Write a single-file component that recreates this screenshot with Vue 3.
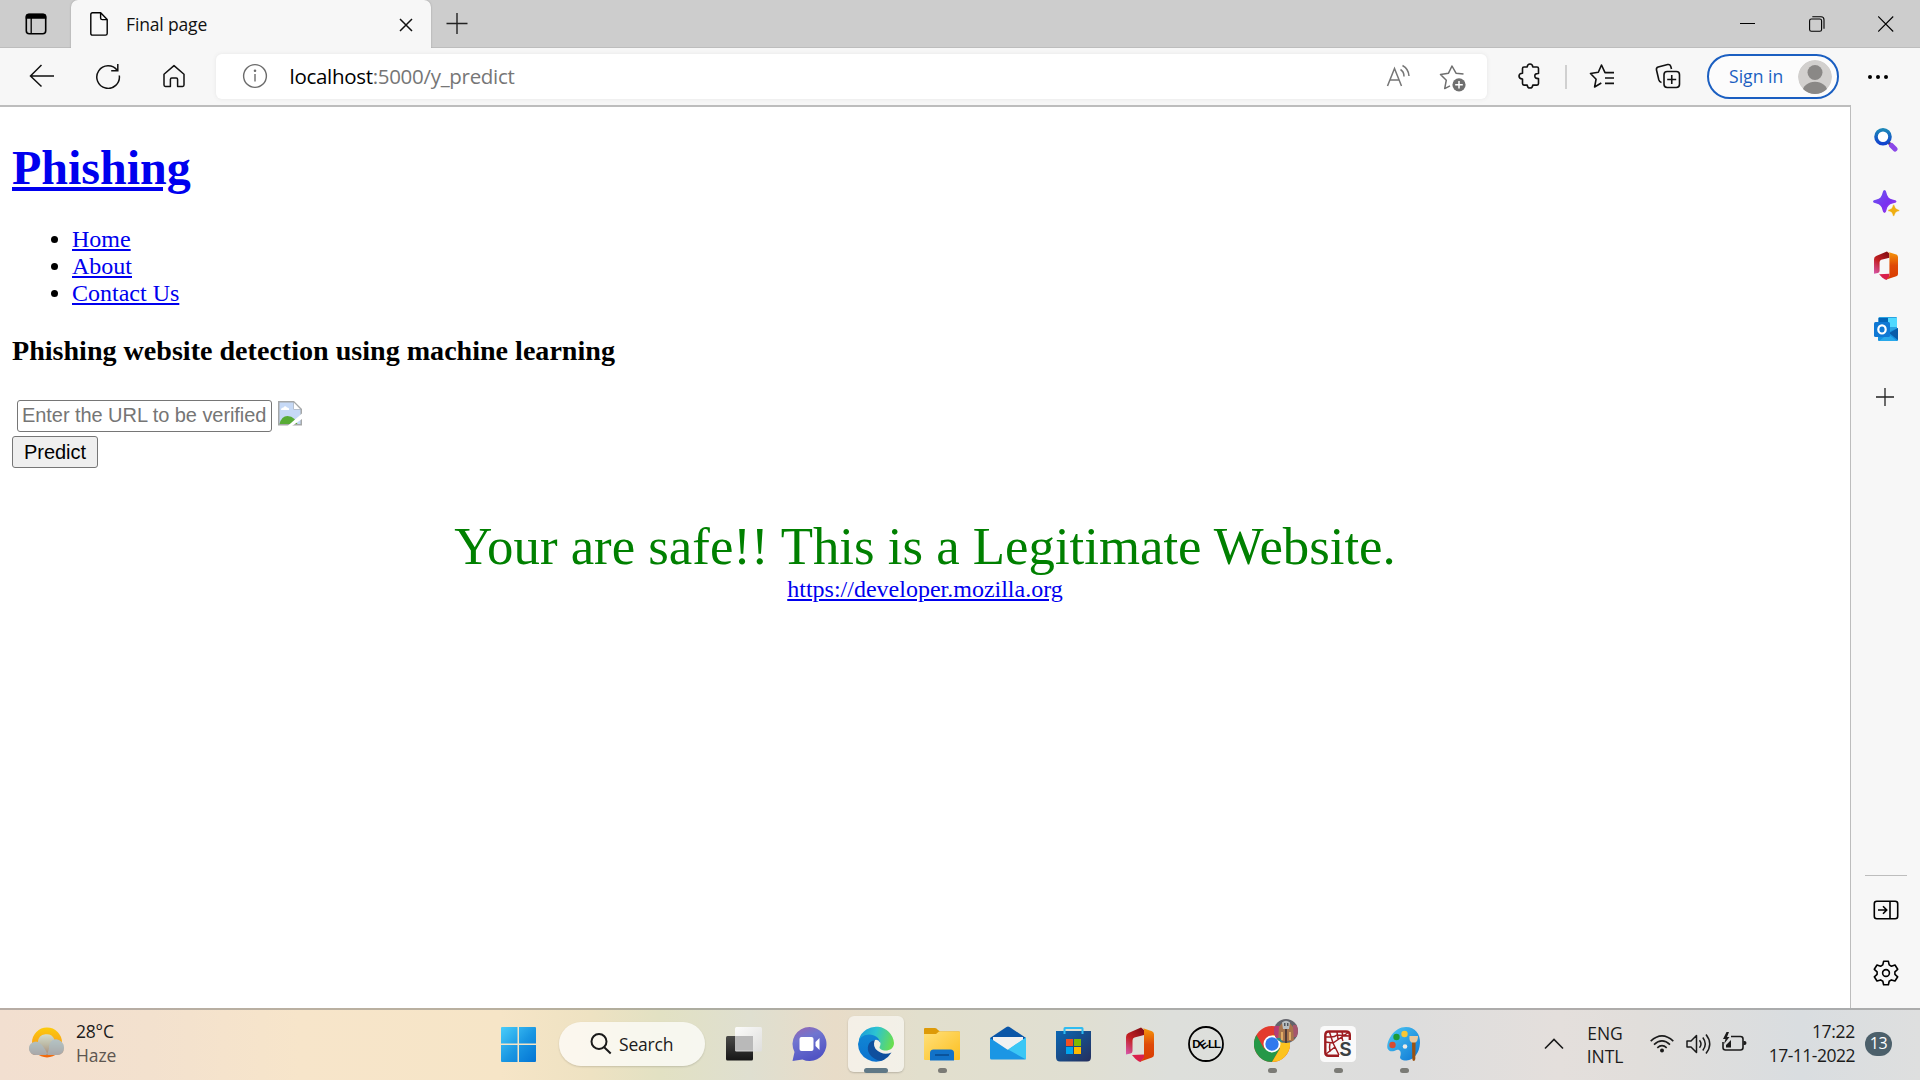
<script setup>
const links = ['Home', 'About', 'Contact Us']
</script>

<template>
  <div class="screen">
    <header class="tabstrip">
      <svg class="tab-actions" width="22" height="22" viewBox="0 0 22 22" fill="none" stroke="#000" stroke-width="1.6">
        <rect x="1.3" y="1.3" width="19.4" height="19.4" rx="3" />
        <path d="M1.5 5V3.5q0-2 2-2h15q2 0 2 2V5z" fill="#000" />
        <path d="M6.2 5v15.500" stroke-width="1.300" />
      </svg>
      <div class="tab">
        <svg width="18" height="24" viewBox="0 0 18 24" fill="none" stroke="#000" stroke-width="1.4" stroke-linejoin="round">
          <path d="M2.500.800h8.200l6.500 6.600v14q0 1.700-1.700 1.700h-13Q.8 23.100.8 21.400V2.500Q.8.800 2.500.800zM10.600.900v5q0 1.700 1.700 1.700h4.800" />
        </svg>
        <span class="tab-title">Final page</span>
        <svg class="tab-close" width="14" height="14" viewBox="0 0 14 14" stroke="#111" stroke-width="1.5"><path d="M1 1l12 12M13 1L1 13" /></svg>
      </div>
      <svg class="new-tab" width="22" height="22" viewBox="0 0 22 22" stroke="#222" stroke-width="1.4"><path d="M11 0v21M.5 10.500h21" /></svg>
      <div class="window-controls">
        <svg width="16" height="16" viewBox="0 0 16 16" stroke="#000" stroke-width="1"><path d="M0 7.500h15" /></svg>
        <svg width="16" height="16" viewBox="0 0 16 16" fill="none" stroke="#000" stroke-width="1.100"><rect x=".6" y="3" width="12" height="12.200" rx="1.800" /><path d="M3.300.800h8.700q3 0 3 3v9" /></svg>
        <svg width="16" height="16" viewBox="0 0 16 16" stroke="#000" stroke-width="1.100"><path d="M.2.5l15 15M15.200.5l-15 15" /></svg>
      </div>
    </header>

    <div class="toolbar">
      <svg class="back" width="26" height="24" viewBox="0 0 26 24" fill="none" stroke="#111" stroke-width="1.500"><path d="M12.500 1L1.500 12l11 10.500M1.500 12H25" /></svg>
      <svg class="reload" width="26" height="26" viewBox="0 0 26 26" fill="none" stroke="#111" stroke-width="1.500"><path d="M22.300 7.500A11.300 11.300 0 1 0 24.300 12.500M22.800 1v6.800h-6.600" /></svg>
      <svg class="home" width="24" height="24" viewBox="0 0 24 24" fill="none" stroke="#111" stroke-width="1.500" stroke-linejoin="round"><path d="M2 10.300L12 1.600l10 8.700v10.700q0 1.400-1.400 1.400h-5v-7q0-1.400-1.400-1.400H9.800q-1.400 0-1.400 1.400v7h-5Q2 22.400 2 21z" /></svg>
      <div class="address">
        <svg class="info" width="26" height="26" viewBox="0 0 26 26" fill="none" stroke="#6b6b6b" stroke-width="1.400"><circle cx="13" cy="13" r="11.400" /><path d="M13 11v7.500" /><circle cx="13" cy="7.700" r=".6" fill="#6b6b6b" /></svg>
        <span class="url"><b>localhost</b>:5000/y_predict</span>
        <svg class="read" width="24" height="24" viewBox="0 0 24 24" fill="none" stroke="#767676" stroke-width="1.500"><path d="M1.500 22L8.500 4.500 15.500 22M4 16h9" /><path d="M14.500 5.500q3.500 2.200 3.500 7M16.500 1.500q6.200 3.500 6.500 10.500" /></svg>
        <svg class="star" width="28" height="28" viewBox="0 0 28 28" fill="none" stroke="#6f6f6f" stroke-width="1.500" stroke-linejoin="round"><path d="M24.500 10l-7.500-.8L13 2 9.500 9.200 1.500 10.500l5.800 5.700-1.600 8.400 5.300-2.700" /><circle cx="20" cy="20.800" r="6.600" fill="#6f6f6f" stroke="none" /><path d="M20 17v7.600M16.200 20.800h7.600" stroke="#fff" /></svg>
      </div>
      <svg class="puzzle" width="24" height="26" viewBox="0 0 24 26" fill="none" stroke="#111" stroke-width="1.600" stroke-linejoin="round"><path d="M5.500 5.500q0-1.500 1.500-1.500h3.200q.3-3 2.800-3t2.800 3H20q1.500 0 1.500 1.500v5q-3.700-.2-3.700 2.500t3.700 2.600v5q0 1.500-1.500 1.500h-4.200q-.3 2.900-2.800 2.900t-2.800-2.900H7q-1.500 0-1.500-1.500v-4.500q-3.500-.2-3.500-3t3.500-2.900z" /></svg>
      <i class="divider"></i>
      <svg class="favs" width="26" height="26" viewBox="0 0 26 26" fill="none" stroke="#111" stroke-width="1.600" stroke-linejoin="round"><path d="M22 9.600h-6L12.500 2 9.300 9.200 1.500 10.500l5.600 5.700L5.600 24l6.700-4M16.500 9.600h8.500M16 15h9M16 20.400h9" /></svg>
      <svg class="collections" width="26" height="26" viewBox="0 0 26 26" fill="none" stroke="#111" stroke-width="1.600"><path d="M6.500 19.500Q4.400 19 3.800 16.800L1.500 7q-.5-2.300 1.700-3l9.500-2.500q2.300-.4 3 1.700L16.500 6" /><rect x="9" y="8.500" width="15.500" height="16" rx="3.200" /><path d="M16.750 12v9M12.200 16.500h9" /></svg>
      <div class="signin">
        <span>Sign in</span>
        <svg width="34" height="34" viewBox="0 0 34 34"><defs><clipPath id="av"><circle cx="17" cy="17" r="17" /></clipPath></defs><g clip-path="url(#av)"><circle cx="17" cy="17" r="17" fill="#d2d0ce" /><circle cx="17" cy="12.500" r="7.500" fill="#8a8886" /><ellipse cx="17" cy="32" rx="12.500" ry="10.300" fill="#8a8886" /></g></svg>
      </div>
      <svg class="more" width="20" height="6" viewBox="0 0 20 6"><circle cx="2" cy="3" r="2" /><circle cx="10" cy="3" r="2" /><circle cx="18" cy="3" r="2" /></svg>
    </div>

    <div class="middle">
      <main class="page">
        <h1><a>Phishing</a></h1>
        <ul>
          <li v-for="l in links" :key="l"><a>{{ l }}</a></li>
        </ul>
        <h3>Phishing website detection using machine learning</h3>
        <div class="form-row">
          <div class="field"><span>Enter the URL to be verified</span></div>
          <svg class="broken" width="24" height="25" viewBox="0 0 24 25"><path d="M0 0h16l8 8v16.500H0z" fill="#a5a7a8" /><path d="M1.500 1.500h14v7h7V23h-21z" fill="#c6d9f6" /><path d="M16 1.800V8h6z" fill="#fff" /><path d="M3 9q0-2.500 2.500-2.500Q7 4 9 6.500q2.500.3 2 2.500z" fill="#fff" /><path d="M1.500 23q2-8 8-8 4 0 7 3l3 5z" fill="#57ab35" /><path d="M24 12.500L9.500 25H14l10-7z" fill="#fff" /></svg>
        </div>
        <button type="button">Predict</button>
        <div class="verdict">Your are safe!! This is a Legitimate Website.</div>
        <div class="result"><a>https://developer.mozilla.org</a></div>
      </main>

      <aside class="sidebar">
        <svg class="s1" width="24" height="24" viewBox="0 0 24 24"><defs><linearGradient id="sg" x1="0" y1="0" x2="0" y2="1"><stop stop-color="#1c86b8" /><stop offset="1" stop-color="#1242cf" /></linearGradient></defs><path d="M14.500 14.500l3 3" stroke="#5b4150" stroke-width="3" /><path d="M17.500 17.500l3.500 3.500" stroke="#8b48e8" stroke-width="5" stroke-linecap="round" /><circle cx="9" cy="8.800" r="7" fill="#fff" stroke="url(#sg)" stroke-width="3.600" /></svg>
        <svg class="s2" width="27" height="27" viewBox="0 0 27 27"><defs><linearGradient id="pg" x1="0" y1="0" x2="1" y2="1"><stop stop-color="#6b5cf0" /><stop offset=".6" stop-color="#7a2ff0" /><stop offset="1" stop-color="#b04ae8" /></linearGradient></defs><path d="M11.500 0q1.500 0 2 3 1 5.500 6 6.500 4 .7 4 2t-4 2q-5 1-6 6.500-.5 3-2 3t-2-3q-1-5.500-6-6.500-3.500-.7-3.500-2t3.500-2q5-1 6-6.500.5-3 2-3z" fill="url(#pg)" /><path d="M20.700 14.500q1 0 1.300 2 .4 2.300 2.700 2.700 1.800.3 1.800 1.200t-1.800 1.200q-2.300.4-2.700 2.700-.3 2-1.300 2t-1.300-2q-.4-2.300-2.700-2.700-1.800-.3-1.800-1.200t1.800-1.200q2.300-.4 2.700-2.700.3-2 1.300-2z" fill="#efae12" stroke="#f7f7f7" stroke-width=".5" /></svg>
        <svg class="s3" width="24" height="29" viewBox="0 0 28 35" preserveAspectRatio="none"><use href="#office" /></svg>
        <svg class="s4" width="24" height="24" viewBox="0 0 24 24"><path d="M5.500 0H22q1 0 1 1v13H4.500V1q0-1 1-1z" fill="#29a3e2" /><path d="M14 1h9v9h-9z" fill="#50d9ff" /><path d="M4.500 1H14v5H4.500z" fill="#0364b8" /><path d="M4 14l10 1 10-4v12q0 1-1 1H5q-1 0-1-1z" fill="#1490df" /><path d="M24 11v12l-9-7z" fill="#0a5ca8" /><path d="M14 17l9 7H5z" fill="#28a8ea" /><rect y="5" width="16" height="15" rx="1.500" fill="#0f78d4" /><ellipse cx="8" cy="12.400" rx="3.700" ry="4.100" fill="none" stroke="#fff" stroke-width="2.200" /></svg>
        <svg class="s5" width="18" height="18" viewBox="0 0 18 18" stroke="#222" stroke-width="1.300"><path d="M9 0v18M0 9h18" /></svg>
        <i class="rule"></i>
        <svg class="s6" width="26" height="20" viewBox="0 0 26 20" fill="none" stroke="#000" stroke-width="1.600"><rect x="1.300" y="1.300" width="23.400" height="17.400" rx="2.500" /><path d="M17 1.500v17M5 10h8.500M10 6.300l3.700 3.700-3.700 3.700" /></svg>
        <svg class="s7" width="26" height="26" viewBox="0 0 26 26" fill="none" stroke="#000" stroke-width="1.600" stroke-linejoin="round"><path d="M10.600 1.300h4.800l.8 3.600 2.200 1.300 3.600-1.200 2.700 4.300-2.800 2.500v2.500l2.800 2.500-2.700 4.200-3.600-1.100-2.200 1.300-.8 3.500h-4.800l-.8-3.500-2.200-1.300L4 21l-2.700-4.200 2.800-2.500v-2.500L1.300 9.300 4 5l3.600 1.200 2.200-1.300z" /><circle cx="13" cy="13" r="3.400" /></svg>
      </aside>
    </div>

    <footer class="taskbar">
      <svg class="weather" width="36" height="32" viewBox="0 0 36 32"><defs><linearGradient id="sun" x1="0" y1="0" x2="0" y2="1"><stop stop-color="#fccb0b" /><stop offset=".6" stop-color="#f9a11b" /><stop offset="1" stop-color="#f0620b" /></linearGradient><linearGradient id="cl" x1="0" y1="0" x2="0" y2="1"><stop stop-color="#d4dccb" /><stop offset=".5" stop-color="#bcb9a5" /><stop offset="1" stop-color="#a98974" /></linearGradient></defs><circle cx="18" cy="15.500" r="15" fill="url(#sun)" /><path d="M7 28a6.500 6.500 0 0 1-1-13q1.500-.4 2.800 0a8.700 8.700 0 0 1 16.700-2.300a8 8 0 0 1 9.500 7.800q0 7.500-7 7.500z" fill="url(#cl)" /><path d="M7 28q-7-1-7-6.500T6 14.500q7 0 13 13.500zM28 28q7-1 7-7.500T27 12q-6 1-7 7 0 6-3 9z" fill="#a8bccb" opacity=".6" /></svg>
      <div class="weather-text"><span>28°C</span><small>Haze</small></div>

      <div class="apps">
        <div class="app start"><svg width="36" height="36" viewBox="0 0 36 36"><defs><linearGradient id="wg" gradientUnits="userSpaceOnUse" x1="0" y1="0" x2="36" y2="36"><stop stop-color="#4cd0fb" /><stop offset=".55" stop-color="#1996e2" /><stop offset="1" stop-color="#0374d4" /></linearGradient></defs><path d="M2 1h15.500v16.500H1V2q0-1 1-1zM19 1h16q1 0 1 1v15.500H19zM1 19h16.500v17H2q-1 0-1-1zM19 19h17v16q0 1-1 1H19z" fill="url(#wg)" /></svg></div>
        <div class="search"><svg width="22" height="22" viewBox="0 0 22 22" fill="none" stroke="#1a1a1a" stroke-width="2"><circle cx="9" cy="8.500" r="7.500" /><path d="M14.200 14.200l6.500 6.300" /></svg><span>Search</span></div>
        <div class="app"><svg width="36" height="36" viewBox="0 0 36 36"><defs><linearGradient id="tk" x1="0" y1="0" x2="0" y2="1"><stop stop-color="#4a4a48" /><stop offset="1" stop-color="#161616" /></linearGradient><linearGradient id="tw" x1="0" y1="0" x2="1" y2="1"><stop stop-color="#fff" /><stop offset="1" stop-color="#dedede" /></linearGradient></defs><rect y="10" width="27" height="24.500" rx="1.500" fill="url(#tk)" /><rect x="9" y="1" width="27" height="24.500" rx="1.500" fill="url(#tw)" opacity=".9" /><path d="M9 10h18v14.500H9z" fill="#b9b9b9" /></svg></div>
        <div class="app"><svg width="36" height="36" viewBox="0 0 36 36"><defs><linearGradient id="ch" x1="0" y1="0" x2=".4" y2="1"><stop stop-color="#9a64ad" /><stop offset=".4" stop-color="#7075d0" /><stop offset="1" stop-color="#5154c4" /></linearGradient></defs><path d="M17.500 1a17 17 0 1 1-7 32.500L.5 35l2-9A17 17 0 0 1 17.500 1z" fill="url(#ch)" /><rect x="7.500" y="11" width="14" height="14" rx="2" fill="#fff" /><path d="M23.500 16l4-4v12l-4-4z" fill="#fff" /></svg></div>
        <div class="app active"><svg width="36" height="36" viewBox="0 0 36 36"><defs><linearGradient id="eg" x1="0" y1=".3" x2="1" y2=".5"><stop stop-color="#1c9bd8" /><stop offset=".45" stop-color="#2cc3d2" /><stop offset="1" stop-color="#69de50" /></linearGradient><linearGradient id="eb" x1="0" y1="0" x2="0" y2="1"><stop stop-color="#1186d4" /><stop offset="1" stop-color="#0b72cf" /></linearGradient></defs><path d="M1 13A18 18 0 0 1 36 17c0 5-4 7.500-8.500 7.500-3.500 0-6-1.500-6-3 0-1 1-1.500 1-4 0-4-4-7-9-7q-8 0-12.500 5z" fill="url(#eg)" /><path d="M0 18Q1 9 11 8.500c6 0 11 4 11.500 8.500Q20 13 17 14c-4 1.500-5 6-3 11 2.500 6 8 9 14 7.500A18 18 0 0 1 0 18z" fill="url(#eb)" /><path d="M17 14c-7 1-9 8-5.500 14 3.500 5 10 8 14 6q5-2.500 8-7.500-6 2.500-11 0-7-3.500-6.500-9 .2-2 1-3.500z" fill="#0f4f9e" /></svg><i></i></div>
        <div class="app run"><svg width="36" height="36" viewBox="0 0 36 36"><defs><linearGradient id="fg" x1="0" y1="0" x2="1" y2="1"><stop stop-color="#ffe07a" /><stop offset="1" stop-color="#fcbf20" /></linearGradient></defs><path d="M0 3q0-1 1-1h10q1.500 0 3 2l2 1.500h19q1 0 1 1V12H0z" fill="#dd9a08" /><path d="M0 8h12l3-2.500h20q1 0 1 1V33q0 1-1 1H1q-1 0-1-1z" fill="url(#fg)" /><path d="M6 34V27q0-3.500 3.500-3.500h17Q30 23.500 30 27v7.500H6z" fill="#1172c8" /><path d="M11 29h14" stroke="#0a4c90" stroke-width="1.600" /></svg><i></i></div>
        <div class="app"><svg width="36" height="36" viewBox="0 0 36 36"><path d="M0 12L16.500 1q1.500-1 3 0L36 12v5H0z" fill="#0a56a8" /><path d="M3 11h30v12H3z" fill="#f1f1f1" /><path d="M0 12l18 12L36 11.500V32q0 1.500-1.500 1.500h-33Q0 33.500 0 32z" fill="#1b96e4" /><path d="M18 23.500l18-12V33.500z" fill="#3bc7f5" /></svg></div>
        <div class="app"><svg width="36" height="36" viewBox="0 0 36 36"><defs><linearGradient id="st" x1="0" y1="0" x2="1" y2="1"><stop stop-color="#0a67b4" /><stop offset="1" stop-color="#262f5c" /></linearGradient></defs><path d="M0 5h35v26q0 4.500-4 4.500H4q-4 0-4-4.500z" fill="url(#st)" /><path d="M8.500 8V2.500Q8.500 2 9 2h17q.5 0 .5.500V8" fill="none" stroke="#2fbcf1" stroke-width="2" /><path d="M10 13h7v7h-7z" fill="#f25022" /><path d="M18 13h7v7h-7z" fill="#7fba00" /><path d="M10 21h7v7h-7z" fill="#00a4ef" /><path d="M18 21h7v7h-7z" fill="#ffb900" /></svg></div>
        <div class="app"><svg width="28" height="35" viewBox="0 0 28 35"><defs><linearGradient id="o1" x1=".6" y1="0" x2="0" y2="1"><stop stop-color="#8e1016" /><stop offset=".45" stop-color="#c32022" /><stop offset="1" stop-color="#d75ab0" /></linearGradient><linearGradient id="o2" x1="0" y1="0" x2="0" y2="1"><stop stop-color="#f79a0a" /><stop offset=".5" stop-color="#df4a08" /><stop offset="1" stop-color="#d83b01" /></linearGradient></defs><g id="office"><path d="M0 10Q0 7 2.500 6L15 .5 18 3v5L8.500 10.500q-2 .7-2 3V24q0 2-2 2.500L0 27.500z" fill="url(#o1)" /><path d="M6 28l12-.5V31l-3.500 4q-1.500 0-5-3z" fill="#d9204c" /><path d="M15 .5l11 3.800q2 .8 2 3v20.400q0 2-2 2.800l-11.500 4 3.500-4V2z" fill="url(#o2)" /></g></svg></div>
        <div class="app"><svg width="36" height="36" viewBox="0 0 36 36"><circle cx="18" cy="18" r="17" fill="none" stroke="#000" stroke-width="1.800" /><g class="dell"><text x="4.200" y="22.200">D</text><text x="11.500" y="22" transform="rotate(-38 16 18)">E</text><text x="20" y="22.200" textLength="13">LL</text></g></svg></div>
        <div class="app run chrome"><svg width="36" height="36" viewBox="0 0 36 36"><circle cx="18" cy="18" r="18" fill="#e33b2e" /><path d="M2.400 9A18 18 0 0 0 18 36l8-13.500L10 22.500z" fill="#259847" /><path d="M18 36A18 18 0 0 0 33.600 9H18l8 13.500z" fill="#fcc31f" /><circle cx="18" cy="18" r="8.500" fill="#fff" /><circle cx="18" cy="18" r="6.700" fill="#3079ee" /></svg>
          <svg class="profile" width="24" height="24" viewBox="0 0 24 24"><defs><clipPath id="pf"><circle cx="12" cy="12" r="12" /></clipPath></defs><g clip-path="url(#pf)"><path d="M0 0h24v24H0z" fill="#62646b" /><path d="M0 7h6v12H0z" fill="#b63c75" /><path d="M19 6h5v12h-5z" fill="#a5566d" /><path d="M4 22l1-14 4-5h6l4 5 1 14z" fill="#a8744c" /><path d="M8 3.500Q12 0 16 3.500L15 10H9z" fill="#b9bfc2" /><path d="M10 4h1.500v3H10zM13 4h1.500v3H13z" fill="#52565c" /><path d="M7 13h2v8H7zM15 13h2v8h-2z" fill="#e0ad66" /><path d="M11 10h2v14h-2z" fill="#503b37" /><path d="M0 19h6l3 5H0z" fill="#268b8b" /></g></svg><i></i></div>
        <div class="app run"><svg width="36" height="36" viewBox="0 0 36 36"><rect width="36" height="36" rx="4.500" fill="#fafafa" /><g fill="none" stroke="#9d1c20" stroke-width="1.500"><path d="M19 29.800H8.500q-3.200 0-3.200-3.200V9q0-3.500 3.500-3.500H26q3.800 0 3.800 3.500v5" stroke-width="2.400" /><path d="M5 16l8 1L29 6M13 17l6 12M13 17L9.500 6M10 17q-1 4 0 9M15 21L6 28M18 13l-1-7M23 10l-1-4M11 11q4 0 6-2l12 1M5 11l6 0M22 10q0 3 1 5" /></g><text class="spy" x="19.500" y="30" textLength="12" lengthAdjust="spacingAndGlyphs">S</text></svg><i></i></div>
        <div class="app run"><svg width="36" height="36" viewBox="0 0 36 36"><defs><linearGradient id="pt" x1="0" y1="0" x2="1" y2="1"><stop stop-color="#4ecaf5" /><stop offset="1" stop-color="#0c75d3" /></linearGradient></defs><path d="M20 1c9 0 14.500 7 14 16-.5 10-6 17-13.500 17.500-5 0-7.500-1.500-6-5 1-4-1-6.500-4-5.500-3 1.500-7 2.500-9-1.500C0 15 8 1 20 1z" fill="url(#pt)" /><circle cx="6.500" cy="19" r="3.200" fill="#d84c32" /><circle cx="10.500" cy="11" r="3.200" fill="#1c9b35" /><circle cx="18.500" cy="8" r="3.200" fill="#f8c735" /><circle cx="19" cy="20.500" r="2.300" fill="#ecebe7" /><path d="M26 16h3.600l-.3 17q-.3 2-1.500 2t-1.500-2z" fill="#9b5313" /><path d="M23.500 10H32q0 5-2.500 6.500h-4Q23 15 23.500 10z" fill="#e8c9a0" /></svg><i></i></div>
      </div>

      <svg class="chev" width="20" height="12" viewBox="0 0 20 12" fill="none" stroke="#1b1b1b" stroke-width="1.600"><path d="M1 10.500l9-9 9 9" /></svg>
      <div class="lang"><span>ENG</span><span>INTL</span></div>
      <svg class="wifi" width="24" height="18" viewBox="0 0 24 18" fill="none" stroke="#1b1b1b" stroke-width="1.600"><path d="M.7 6.200q11.300-10.500 22.600 0M4 9.600q8-7.400 16 0M7.300 12.800q4.700-4.300 9.400 0" /><circle cx="12" cy="15.500" r="2" fill="#1b1b1b" stroke="none" /></svg>
      <svg class="sound" width="25" height="22" viewBox="0 0 25 22" fill="none" stroke="#1b1b1b" stroke-width="1.500" stroke-linejoin="round"><path d="M1 8h4l5.500-5.500v17L5 14H1zM13.500 7.200q3 3.800 0 7.600M16.800 4.500q5 6.500 0 13M20 1.500q7.500 9.500 0 19" /></svg>
      <svg class="battery" width="25" height="20" viewBox="0 0 25 20"><path d="M9 4.500h9.500q2.500 0 2.500 2.500v8.500q0 2.500-2.500 2.500h-15Q1 18 1 15.500V10" fill="none" stroke="#1b1b1b" stroke-width="1.600" /><path d="M21.500 9h1q2 0 2 2t-2 2h-1zM4.500 0L1 7h2.500L2 12l5.500-7H5l2-5zM4 15.500V13l5-5v7.500z" fill="#1b1b1b" /></svg>
      <div class="clock"><span>17:22</span><span class="date">17-11-2022</span></div>
      <div class="badge">13</div>
    </footer>
  </div>
</template>

<style>
body { margin: 0; overflow: hidden; }
</style>

<style scoped>
* { box-sizing: border-box; }
.screen { width: 1920px; height: 1080px; display: flex; flex-direction: column; background: #fff; overflow: hidden; font-family: "Open Sans", "Noto Sans", sans-serif; }
svg { display: block; flex: none; }

.tabstrip { height: 48px; flex: none; display: flex; background: #cdcdcd; box-shadow: inset 0 -1px 0 #bdbdbd; }
.tab-actions { margin: 13px 0 0 25px; }
.tab { position: relative; width: 360px; height: 48px; margin-left: 24px; padding: 0 18px 0 19px; display: flex; align-items: center; background: #f7f7f7; border-radius: 7px 7px 0 0; box-shadow: 0 0 2px #9a9a9a; clip-path: inset(0 -3px 0 -3px); }
.tab-title { margin: -1px 0 0 18px; font-size: 17.500px; line-height: 24px; letter-spacing: -.15px; color: #111; white-space: nowrap; }
.tab-close { margin: 2px 0 0 auto; }
.new-tab { margin: 13px 0 0 15px; }
.window-controls { display: flex; gap: 53px; margin: 16px 26px 0 auto; }

.toolbar { height: 59px; flex: none; display: flex; background: #f7f7f7; padding-top: 6px; box-shadow: inset -69px 0 0 #f7f7f7, inset 0 -2px 0 #bdbdbd; }
.back { margin: 10px 0 0 29px; }
.reload { margin: 9px 0 0 40px; }
.home { margin: 10px 0 0 41px; }
.address { width: 1271px; height: 45px; margin-left: 30px; display: flex; background: #fff; border-radius: 6px; box-shadow: 0 0 4px #e6e6e6; }
.info { margin: 9px 0 0 26px; }
.url { margin: 6px 0 0 21.500px; font-size: 20.500px; line-height: 32px; letter-spacing: -.3px; color: #767676; white-space: nowrap; }
.url b { font-weight: 400; color: #000; }
.read { margin: 10px 0 0 auto; }
.star { margin: 10px 20px 0 29px; }
.puzzle { margin: 9px 0 0 30px; }
.divider { width: 2px; height: 24px; margin: 11px 0 0 24px; background: #d0d0d0; }
.favs { margin: 9px 0 0 22px; }
.collections { margin: 9px 0 0 40px; }
.signin { width: 132px; height: 45px; margin-left: 26px; padding: 0 5px 0 20px; border: 2px solid #1b5fc1; border-radius: 23px; display: flex; align-items: center; justify-content: space-between; background: #fcfcfc; }
.signin span { color: #1b5fc1; font-size: 17.500px; line-height: 24px; letter-spacing: .05px; margin-top: -1px; white-space: nowrap; }
.more { margin: 20px 0 0 29px; }

.middle { flex: 1; min-height: 0; display: flex; }
.page { width: 1851px; padding: 0 12px 0 12px; border-right: 1px solid #bdbdbd; background: #fff; font: 24px/27px "Liberation Serif", serif; color: #000; }
.page a { color: #0000ee; text-decoration: underline; }
h1 { margin: 33px 0 31px; font-size: 48px; line-height: 55px; }
ul { margin: 0 0 28px; padding-left: 60px; }
h3 { margin: 0; font-size: 28.080px; line-height: 32px; }
.form-row { display: flex; margin: 33px 0 0 5px; }
.field { width: 255px; height: 32px; padding: 0 4px; border: 1px solid #767676; border-radius: 3px; font: 20px/29px "Liberation Sans", sans-serif; letter-spacing: -.06px; color: #757575; white-space: nowrap; }
.field span { display: block; }
.broken { margin: 1px 0 0 6px; }
button { display: block; width: 86px; height: 32px; margin: 4px 0 0; padding: 0; border: 1px solid #767676; border-radius: 3px; background: #efefef; color: #000; font: 20px/28px "Liberation Sans", sans-serif; }
.verdict { margin-top: 49px; text-align: center; font-size: 52.800px; line-height: 59px; color: #008000; white-space: nowrap; }
.result { text-align: center; }

.sidebar { flex: 1; background: #f7f7f7; display: flex; flex-direction: column; align-items: center; }
.s1 { margin-top: 21px; }
.s2 { margin: 38px 0 0 2px; }
.s3 { margin-top: 34px; }
.s4 { margin-top: 37px; }
.s5 { margin: 47px 1px 0 0; }
.rule { width: 42px; height: 1px; margin-top: 469px; background: #bdbdbd; }
.s6 { margin-top: 24px; }
.s7 { margin-top: 40px; }

.taskbar { height: 72px; flex: none; display: flex; border-top: 2px solid rgba(110, 110, 110, .45); background: linear-gradient(90deg, #f2dfd0 0, #f3e1ce 150px, #f7e5ca 300px, #f6e5c7 500px, #eee2c2 590px, #e2e1c3 660px, #dfdfd0 750px, #e8dcc8 835px, #e2dfcd 920px, #e0dfd2 1080px, #dddfdb 1170px, #dddddd 1400px, #e4dfdc 1560px, #e1dedb 1640px, #d9dde0 1800px, #dedfdf 1920px); background-clip: border-box; background-origin: border-box; color: #1b1b1b; font-size: 17.500px; line-height: 24px; }
.weather { margin: 17px 0 0 29px; }
.weather-text { display: flex; flex-direction: column; width: 61px; margin: 9px 0 0 11px; letter-spacing: -.2px; }
.weather-text small { font-size: 17.500px; color: #5d5650; letter-spacing: -.1px; }
.apps { display: flex; margin-left: 348px; padding-top: 6px; }
.app { position: relative; width: 56px; height: 56px; margin: 0 5px; display: flex; align-items: center; justify-content: center; border-radius: 6px; }
.start { margin-right: 13px; }
.search { width: 146px; height: 44px; margin: 6px 6px 0 0; border-radius: 22px; background: rgba(255, 255, 255, .72); box-shadow: 0 1px 2px rgba(0, 0, 0, .15); display: flex; align-items: center; padding-left: 31px; }
.search span { margin: 0 0 0 7px; letter-spacing: -.2px; }
.active { background: rgba(255, 255, 255, .55); box-shadow: 0 1px 2px rgba(0, 0, 0, .2); }
.app i { position: absolute; bottom: -1px; left: 50%; width: 9px; height: 5px; margin-left: -4px; border-radius: 3px; background: #7b7b76; }
.active i { width: 24px; margin-left: -12px; background: #5f7886; }
.profile { position: absolute; left: 30px; top: 3px; }
.dell { font: 700 11.500px "Liberation Sans", sans-serif; }
.spy { font: 700 21px "Liberation Sans", sans-serif; fill: #3b3f42; stroke: #fafafa; stroke-width: 1.500px; paint-order: stroke; }
.chev { margin: 28px 0 0 107px; }
.lang { width: 50px; display: flex; flex-direction: column; align-items: center; line-height: 23px; margin: 12px 0 0 16px; letter-spacing: -.1px; }
.wifi { margin: 25px 0 0 20px; }
.sound { margin: 23px 0 0 12px; }
.battery { margin: 22px 0 0 11px; }
.clock { width: 98px; display: flex; flex-direction: column; align-items: flex-end; margin: 9px 0 0 10px; white-space: nowrap; letter-spacing: -.3px; }
.date { letter-spacing: -.5px; }
.badge { width: 27px; height: 24px; margin: 22px 0 0 10px; border-radius: 12px; background: #4c606b; color: #fff; font-size: 16px; line-height: 23px; text-align: center; letter-spacing: -.5px; }
</style>
